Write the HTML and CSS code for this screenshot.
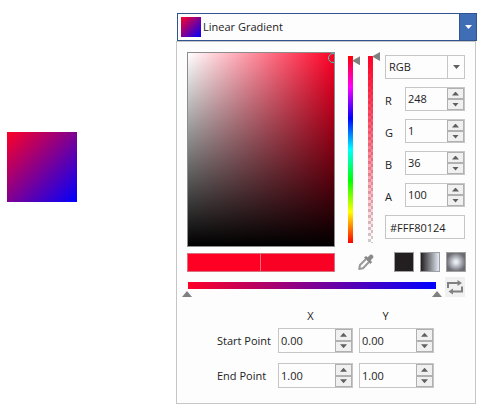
FILE: index.html
```html
<!DOCTYPE html>
<html lang="en">
<head>
<meta charset="utf-8">
<title>Gradient picker</title>
<link rel="stylesheet" href="styles.css">
</head>
<body>
<main class="page">
  <div class="preview"></div>
  <section class="picker">
    <div class="brush">
      <select class="brush-select" aria-label="Brush type"><option>Linear Gradient</option></select>
      <span class="brush-swatch"></span>
      <span class="brush-arrow"><svg width="7" height="4" viewBox="0 0 7 4"><path d="M0 0h7L3.500 4z" fill="#fff"/></svg></span>
    </div>
    <div class="panel">
      <div class="editor">
        <div class="field"><span class="field-ring"></span></div>
        <input class="slider hue" type="range" min="0" max="360" value="352" aria-label="Hue">
        <input class="slider alpha" type="range" min="0" max="100" value="100" aria-label="Opacity">
        <div class="channels">
          <div class="mode">
            <select class="mode-select" aria-label="Color mode"><option>RGB</option></select>
            <span class="mode-arrow"><svg width="7" height="4" viewBox="0 0 7 4"><path d="M0 0h7L3.500 4z" fill="#606060"/></svg></span>
          </div>
          <div class="channel"><label for="r">R</label>
            <div class="spinner"><input id="r" type="text" value="248"><button class="up" aria-label="Increase R"></button><button class="down" aria-label="Decrease R"></button></div></div>
          <div class="channel"><label for="g">G</label>
            <div class="spinner"><input id="g" type="text" value="1"><button class="up" aria-label="Increase G"></button><button class="down" aria-label="Decrease G"></button></div></div>
          <div class="channel"><label for="b">B</label>
            <div class="spinner"><input id="b" type="text" value="36"><button class="up" aria-label="Increase B"></button><button class="down" aria-label="Decrease B"></button></div></div>
          <div class="channel"><label for="a">A</label>
            <div class="spinner"><input id="a" type="text" value="100"><button class="up" aria-label="Increase A"></button><button class="down" aria-label="Decrease A"></button></div></div>
          <input class="hex" type="text" value="#FFF80124" aria-label="Hex value">
        </div>
      </div>
      <div class="tools">
        <div class="compare"><span class="current"></span><span class="previous"></span></div>
        <button class="dropper" aria-label="Pick color">
          <svg width="16" height="16" viewBox="0 0 16 16">
            <path d="M8 5L2 11L1.200 15L5 14.200L11 8" fill="none" stroke="#999" stroke-width="2" stroke-linejoin="round"/>
            <path d="M6 3.500L8 2l1.700 1.200L12 1C13.500-.5 16.500 2.300 15 4L12.700 6.300L14 8l-1.500 2z" fill="#8a8a8a"/>
          </svg>
        </button>
        <div class="kinds">
          <button class="kind solid" aria-label="Solid"></button>
          <button class="kind linear" aria-label="Linear gradient"></button>
          <button class="kind radial" aria-label="Radial gradient"></button>
        </div>
      </div>
      <div class="gradient">
        <div class="stops">
          <div class="bar"></div>
          <div class="handles"><button class="handle" aria-label="First stop"></button><button class="handle" aria-label="Last stop"></button></div>
        </div>
        <button class="swap" aria-label="Reverse gradient">
          <svg width="20" height="20" viewBox="0 0 20 20">
            <path d="M3 11V6H13M17 9.500V14.500H8" fill="none" stroke="#808080" stroke-width="2"/>
            <path d="M12.500 3L17 6L12.500 9zM8 11.500L3.500 14.500L8 17.500z" fill="#808080"/>
          </svg>
        </button>
      </div>
      <div class="axes"><span>X</span><span>Y</span></div>
      <div class="points">
        <span>Start Point</span>
        <div class="spinner"><input type="text" value="0.00" aria-label="Start Point X"><button class="up" aria-label="Increase start X"></button><button class="down" aria-label="Decrease start X"></button></div>
        <div class="spinner"><input type="text" value="0.00" aria-label="Start Point Y"><button class="up" aria-label="Increase start Y"></button><button class="down" aria-label="Decrease start Y"></button></div>
        <span>End Point</span>
        <div class="spinner"><input type="text" value="1.00" aria-label="End Point X"><button class="up" aria-label="Increase end X"></button><button class="down" aria-label="Decrease end X"></button></div>
        <div class="spinner"><input type="text" value="1.00" aria-label="End Point Y"><button class="up" aria-label="Increase end Y"></button><button class="down" aria-label="Decrease end Y"></button></div>
      </div>
    </div>
  </section>
</main>
</body>
</html>
```
FILE: styles.css
```css
* { box-sizing: border-box; }
body {
  margin: 0;
  background: #fff;
  color: #222;
  font: 11px/16px "Open Sans", "Noto Sans", sans-serif;
}
input, select, button {
  margin: 0;
  padding: 0;
  border: 0;
  border-radius: 0;
  background: none;
  color: inherit;
  font: inherit;
  appearance: none;
  outline: none;
  min-width: 0;
}
svg { display: block; }

.page {
  display: flex;
  align-items: flex-start;
  gap: 100px;
  padding: 13px 9px 10px 7px;
}
.preview {
  flex: none;
  width: 70px;
  height: 70px;
  margin-top: 119px;
  background: linear-gradient(135deg, #ff0026, #00f);
}
.picker { flex: 1; }

/* Brush drop-down */
.brush {
  display: grid;
  grid-template-columns: 24px 1fr 17px;
  height: 28px;
  border: 1px solid #31538f;
  background: #fdfdfd;
}
.brush-select {
  grid-area: 1 / 1 / 2 / -1;
  padding-left: 25px;
}
.brush-swatch {
  grid-area: 1 / 1;
  width: 20px;
  height: 20px;
  margin: 3px;
  background: linear-gradient(135deg, #ff0026, #00f);
  pointer-events: none;
}
.brush-arrow {
  grid-area: 1 / 3;
  display: grid;
  place-items: center;
  border-left: 1px solid #31538f;
  background: #3f6db6;
  pointer-events: none;
}

.panel {
  margin: 0 1px 0 -1px;
  padding: 10px 10px 15px;
  border: 1px solid #c6c6c6;
  background: #fdfdfd;
}

/* Color field, sliders and channel values */
.editor {
  display: grid;
  grid-template-columns: 1fr 25px 20px 85px;
}
.field {
  position: relative;
  overflow: hidden;
  border: 1px solid #8c8c8c;
  background:
    linear-gradient(to top, #000, transparent),
    linear-gradient(to right, #fff, transparent),
    #ff0025;
}
.field-ring {
  position: absolute;
  top: 0;
  right: -4px;
  width: 10px;
  height: 10px;
  border: 1px solid #2fd6c0;
  border-radius: 50%;
}
.slider {
  width: 12px;
  height: 100%;
  writing-mode: vertical-lr;
  direction: rtl;
  background-repeat: no-repeat;
  background-position: 0 4px;
  background-size: 5px calc(100% - 8px);
}
.slider::-webkit-slider-thumb {
  appearance: none;
  width: 8px;
  height: 9px;
  margin-left: 4px;
  background: #808080;
  clip-path: polygon(0 50%, 100% 0, 100% 100%);
}
.hue {
  margin-left: 13px;
  background-image: linear-gradient(#f00, #f0f, #00f, #0ff, #0f0, #ff0, #f00);
}
/* Layers: top, bottom and right masks, the color fade, the checkerboard */
.alpha {
  margin-left: 8px;
  background-image:
    linear-gradient(#fdfdfd, #fdfdfd),
    linear-gradient(#fdfdfd, #fdfdfd),
    linear-gradient(#fdfdfd, #fdfdfd),
    linear-gradient(#ff0025, rgba(255, 0, 37, 0)),
    conic-gradient(#ccc 25%, #fff 0 50%, #ccc 0 75%, #fff 0);
  background-position: 0 0, 0 100%, 100% 0, 0 4px, 0 4px;
  background-size: 100% 4px, 100% 4px, 7px 100%, 5px calc(100% - 8px), 6px 6px;
  background-repeat: no-repeat, no-repeat, no-repeat, no-repeat, repeat;
}
.channels {
  display: grid;
  gap: 8px;
  padding: 3px 0 8px 5px;
}
.mode {
  display: grid;
  grid-template-columns: 1fr 17px;
  height: 24px;
  border: 1px solid #c6c6c6;
}
.mode-select {
  grid-area: 1 / 1 / 2 / -1;
  padding-left: 3px;
}
.mode-arrow {
  grid-area: 1 / 2;
  display: grid;
  place-items: center;
  border-left: 1px solid #c6c6c6;
  pointer-events: none;
}
.channel {
  display: grid;
  grid-template-columns: 20px 1fr;
}
.channel label { padding-top: 6px; }
.spinner {
  display: grid;
  grid-template: 1fr 1fr / 1fr 17px;
  height: 24px;
  border: 1px solid #c6c6c6;
}
.spinner input {
  grid-row: 1 / 3;
  width: 100%;
  padding-left: 2px;
}
.up, .down {
  display: grid;
  place-items: center;
  border: 1px solid #b0b0b0;
  background: #f0f0f0;
}
.up::before, .down::before {
  content: "";
  width: 7px;
  height: 4px;
  background: #606060;
  clip-path: polygon(50% 0, 100% 100%, 0 100%);
}
.down::before { clip-path: polygon(0 0, 100% 0, 50% 100%); }
.hex {
  width: 100%;
  height: 24px;
  padding-left: 4px;
  border: 1px solid #c6c6c6;
}

/* Compared colors, dropper and brush kinds */
.tools {
  display: flex;
  align-items: center;
  margin: 5px -1px 5px 0;
}
.compare {
  flex: 1;
  display: grid;
  grid-template-columns: 1fr 1fr;
  height: 19px;
  border: 1px solid #d8717d;
}
.current { background: #ff0025; border-right: 1px solid #ff6a7f; }
.previous { background: #f80124; }
.dropper { margin: 0 20px 0 23px; }
.kinds { display: flex; gap: 6px; }
.kind {
  width: 20px;
  height: 20px;
  border: 1px solid #a0a0a0;
}
.solid { background: #231f20; }
.linear { background: linear-gradient(to right, #231f20, #e4eaf5); }
.radial { background: radial-gradient(circle, #e8edf6 10%, #6b6b72 75%); }

/* Gradient stops */
.gradient {
  display: flex;
  gap: 3px;
  margin-left: -5px;
}
.stops { flex: 1; padding-top: 5px; }
.bar {
  height: 7px;
  margin: 0 6px;
  background: linear-gradient(to right, #ff0026, #00f);
}
.handles {
  display: flex;
  justify-content: space-between;
  margin-top: 2px;
}
.handle {
  width: 10px;
  height: 6px;
  background: #808080;
  clip-path: polygon(50% 0, 100% 100%, 0 100%);
}
.swap { background: #f0f0f0; }

/* Start and end coordinates */
.axes {
  display: grid;
  grid-template-columns: 75px 75px;
  margin: 11px 0 4px 86px;
  text-align: center;
}
.points {
  display: grid;
  grid-template-columns: 55px 75px 75px;
  align-items: center;
  gap: 10px 6px;
  margin-left: 30px;
  white-space: nowrap;
}
.points .spinner { height: 25px; }
```
